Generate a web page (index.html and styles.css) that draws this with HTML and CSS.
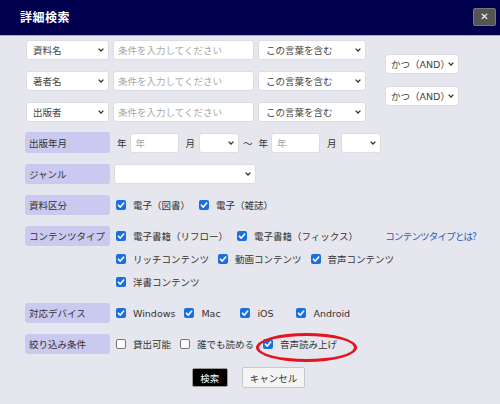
FILE: index.html
```html
<!DOCTYPE html>
<html lang="ja">
<head>
<meta charset="utf-8">
<title>詳細検索</title>
<link rel="stylesheet" href="styles.css">
</head>
<body>
<div class="header">
  <div class="title">詳細検索</div>
  <div class="close">✕</div>
</div>
<div class="content">
  <div class="kw">
    <div class="kw-rows">
      <div class="kw-row">
        <div class="sel w83"><span>資料名</span><svg class="chev" viewBox="0 0 6 4"><path d="M0.6 0.6 L3 3 L5.4 0.6"/></svg></div>
        <div class="inp w141 ph">条件を入力してください</div>
        <div class="sel w108"><span>この言葉を含む</span><svg class="chev" viewBox="0 0 6 4"><path d="M0.6 0.6 L3 3 L5.4 0.6"/></svg></div>
      </div>
      <div class="kw-row">
        <div class="sel w83"><span>著者名</span><svg class="chev" viewBox="0 0 6 4"><path d="M0.6 0.6 L3 3 L5.4 0.6"/></svg></div>
        <div class="inp w141 ph">条件を入力してください</div>
        <div class="sel w108"><span>この言葉を含む</span><svg class="chev" viewBox="0 0 6 4"><path d="M0.6 0.6 L3 3 L5.4 0.6"/></svg></div>
      </div>
      <div class="kw-row">
        <div class="sel w83"><span>出版者</span><svg class="chev" viewBox="0 0 6 4"><path d="M0.6 0.6 L3 3 L5.4 0.6"/></svg></div>
        <div class="inp w141 ph">条件を入力してください</div>
        <div class="sel w108"><span>この言葉を含む</span><svg class="chev" viewBox="0 0 6 4"><path d="M0.6 0.6 L3 3 L5.4 0.6"/></svg></div>
      </div>
    </div>
    <div class="kw-ops">
      <div class="sel w73"><span>かつ（AND）</span><svg class="chev" viewBox="0 0 6 4"><path d="M0.6 0.6 L3 3 L5.4 0.6"/></svg></div>
      <div class="sel w73"><span>かつ（AND）</span><svg class="chev" viewBox="0 0 6 4"><path d="M0.6 0.6 L3 3 L5.4 0.6"/></svg></div>
    </div>
  </div>

  <div class="form">
    <div class="lbl r-date">出版年月</div>
    <div class="cell date r-date">
      <span class="dl">年</span>
      <div class="inp w49 ph">年</div>
      <span class="dl m">月</span>
      <div class="sel w40"><span></span><svg class="chev" viewBox="0 0 6 4"><path d="M0.6 0.6 L3 3 L5.4 0.6"/></svg></div>
      <span class="dl tilde">～</span>
      <span class="dl">年</span>
      <div class="inp w49 ph">年</div>
      <span class="dl m">月</span>
      <div class="sel w40"><span></span><svg class="chev" viewBox="0 0 6 4"><path d="M0.6 0.6 L3 3 L5.4 0.6"/></svg></div>
    </div>

    <div class="lbl">ジャンル</div>
    <div class="cell genre">
      <div class="sel w142"><span></span><svg class="chev" viewBox="0 0 6 4"><path d="M0.6 0.6 L3 3 L5.4 0.6"/></svg></div>
    </div>

    <div class="lbl">資料区分</div>
    <div class="cell opts">
      <span class="opt"><svg class="cb" viewBox="0 0 10 10"><rect x="0" y="0" width="10" height="10" rx="2"/><path d="M2.4 5.2 L4.3 7.1 L7.7 3"/></svg>電子（図書）</span>
      <span class="opt"><svg class="cb" viewBox="0 0 10 10"><rect x="0" y="0" width="10" height="10" rx="2"/><path d="M2.4 5.2 L4.3 7.1 L7.7 3"/></svg>電子（雑誌）</span>
    </div>

    <div class="lbl">コンテンツタイプ</div>
    <div class="cell ctype">
      <div class="opts">
        <span class="opt"><svg class="cb" viewBox="0 0 10 10"><rect x="0" y="0" width="10" height="10" rx="2"/><path d="M2.4 5.2 L4.3 7.1 L7.7 3"/></svg>電子書籍（リフロー）</span>
        <span class="opt"><svg class="cb" viewBox="0 0 10 10"><rect x="0" y="0" width="10" height="10" rx="2"/><path d="M2.4 5.2 L4.3 7.1 L7.7 3"/></svg>電子書籍（フィックス）</span>
        <a class="link">コンテンツタイプとは?</a>
      </div>
      <div class="opts">
        <span class="opt"><svg class="cb" viewBox="0 0 10 10"><rect x="0" y="0" width="10" height="10" rx="2"/><path d="M2.4 5.2 L4.3 7.1 L7.7 3"/></svg>リッチコンテンツ</span>
        <span class="opt"><svg class="cb" viewBox="0 0 10 10"><rect x="0" y="0" width="10" height="10" rx="2"/><path d="M2.4 5.2 L4.3 7.1 L7.7 3"/></svg>動画コンテンツ</span>
        <span class="opt"><svg class="cb" viewBox="0 0 10 10"><rect x="0" y="0" width="10" height="10" rx="2"/><path d="M2.4 5.2 L4.3 7.1 L7.7 3"/></svg>音声コンテンツ</span>
      </div>
      <div class="opts">
        <span class="opt"><svg class="cb" viewBox="0 0 10 10"><rect x="0" y="0" width="10" height="10" rx="2"/><path d="M2.4 5.2 L4.3 7.1 L7.7 3"/></svg>洋書コンテンツ</span>
      </div>
    </div>

    <div class="lbl">対応デバイス</div>
    <div class="cell opts">
      <span class="opt"><svg class="cb" viewBox="0 0 10 10"><rect x="0" y="0" width="10" height="10" rx="2"/><path d="M2.4 5.2 L4.3 7.1 L7.7 3"/></svg>Windows</span>
      <span class="opt"><svg class="cb" viewBox="0 0 10 10"><rect x="0" y="0" width="10" height="10" rx="2"/><path d="M2.4 5.2 L4.3 7.1 L7.7 3"/></svg>Mac</span>
      <span class="opt"><svg class="cb" viewBox="0 0 10 10"><rect x="0" y="0" width="10" height="10" rx="2"/><path d="M2.4 5.2 L4.3 7.1 L7.7 3"/></svg>iOS</span>
      <span class="opt"><svg class="cb" viewBox="0 0 10 10"><rect x="0" y="0" width="10" height="10" rx="2"/><path d="M2.4 5.2 L4.3 7.1 L7.7 3"/></svg>Android</span>
    </div>

    <div class="lbl">絞り込み条件</div>
    <div class="cell opts">
      <span class="opt"><svg class="cb off" viewBox="0 0 10 10"><rect x="0.5" y="0.5" width="9" height="9" rx="1.5"/></svg>貸出可能</span>
      <span class="opt"><svg class="cb off" viewBox="0 0 10 10"><rect x="0.5" y="0.5" width="9" height="9" rx="1.5"/></svg>誰でも読める</span>
      <span class="opt marked"><svg class="cb" viewBox="0 0 10 10"><rect x="0" y="0" width="10" height="10" rx="2"/><path d="M2.4 5.2 L4.3 7.1 L7.7 3"/></svg>音声読み上げ<span class="ring"></span></span>
    </div>
  </div>

  <div class="buttons">
    <button class="btn primary">検索</button>
    <button class="btn">キャンセル</button>
  </div>
</div>
</body>
</html>
```
FILE: styles.css
```css
* { box-sizing: border-box; }
html, body { margin: 0; padding: 0; }
body {
  width: 500px;
  height: 404px;
  overflow: hidden;
  background: #e6e6ee;
  font-family: "DejaVu Sans", "Noto Sans CJK JP", sans-serif;
  font-size: 9.5px;
  color: #333;
}
.header {
  height: 36px;
  background: #00004f;
  border-bottom: 1px solid #a8a8c8;
  display: flex;
  align-items: center;
  justify-content: space-between;
  padding: 0 4px 2px 20px;
}
.title {
  color: #fff;
  font-family: "Noto Sans CJK JP", sans-serif;
  font-weight: bold;
  font-size: 12px;
  letter-spacing: 0.5px;
}
.close {
  width: 23px;
  height: 18px;
  background: #555;
  border: 1px solid #777;
  border-radius: 2px;
  color: #fff;
  font-family: "DejaVu Sans", sans-serif;
  font-size: 10px;
  font-weight: bold;
  display: flex;
  align-items: center;
  justify-content: center;
}
.content {
  padding: 4px 24px 0 25px;
}
.kw { display: flex; align-items: flex-start; }
.kw-rows { display: flex; flex-direction: column; gap: 11px; padding-left: 1px; }
.kw-row { display: flex; gap: 4px; }
.kw-ops { display: flex; flex-direction: column; gap: 12px; margin-left: 19px; padding-top: 14px; }

.sel, .inp {
  height: 20px;
  background: #fff;
  border: 1px solid #dcdce4;
  border-radius: 3px;
  display: flex;
  align-items: center;
}
.sel { justify-content: space-between; padding: 0 4px 0 6px; color: #444; }
.inp { padding: 0 4px; }
.ph { color: #a8a8a8; }
.chev { width: 6px; height: 4px; fill: none; stroke: #333; stroke-width: 1.3; flex: none; }
.w83 { width: 83px; }
.w141 { width: 141px; }
.w108 { width: 108px; padding-left: 7px; }
.w73 { width: 74px; padding-left: 5px; }
.w49 { width: 49px; padding-left: 5px; }
.w40 { width: 40px; }
.w142 { width: 142px; }

.form {
  display: grid;
  grid-template-columns: 85px 1fr;
  column-gap: 6px;
  row-gap: 11px;
  margin-top: 10px;
  align-items: start;
}
.lbl {
  height: 20px;
  background: #cacaf0;
  border-radius: 3px;
  padding: 0 4px;
  display: flex;
  align-items: center;
  color: #333;
  font-family: "Noto Sans CJK JP", sans-serif;
}
.lbl.r-date { height: 21px; }
.cell { min-height: 20px; display: flex; align-items: center; }
.date { gap: 3px; padding-left: 1px; height: 21px; }
.dl { font-family: "Noto Sans CJK JP", sans-serif; }
.dl.m { margin-left: 4px; margin-right: 1px; }
.tilde { margin-left: 1px; margin-right: 3px; }
.genre { margin-left: -2px; }
.opts { display: flex; align-items: center; gap: 9px; height: 20px; }
.ctype { flex-direction: column; align-items: stretch; gap: 3px; }
.opt {
  display: flex;
  align-items: center;
  gap: 7px;
  min-width: 47px;
  white-space: nowrap;
  position: relative;
}
.cb { width: 10px; height: 10px; flex: none; }
.cb rect { fill: #1a6fe0; }
.cb path { fill: none; stroke: #fff; stroke-width: 1.6; stroke-linecap: round; stroke-linejoin: round; }
.cb.off rect { fill: #fff; stroke: #777; stroke-width: 1; }
.link { margin-left: auto; color: #2a58b8; text-decoration: none; font-family: "Noto Sans CJK JP", sans-serif; letter-spacing: -0.8px; }
.ring {
  position: absolute;
  left: -7px;
  top: -4px;
  width: 101px;
  height: 29px;
  border: 3.5px solid #e5141f;
  border-radius: 50%;
}
.buttons {
  display: flex;
  justify-content: center;
  gap: 14px;
  margin-top: 13px;
  padding-right: 4px;
}
.btn {
  font-family: "Noto Sans CJK JP", sans-serif;
  font-size: 9.5px;
  height: 21px;
  padding: 0 7px;
  background: #f4f4f4;
  color: #333;
  border: 1px solid #c8c8c8;
  border-radius: 2px;
}
.btn.primary {
  background: #000;
  color: #fff;
  border: 1px solid #999;
  height: 19px;
  margin-top: 1px;
  width: 36px;
  padding: 0;
}
```
